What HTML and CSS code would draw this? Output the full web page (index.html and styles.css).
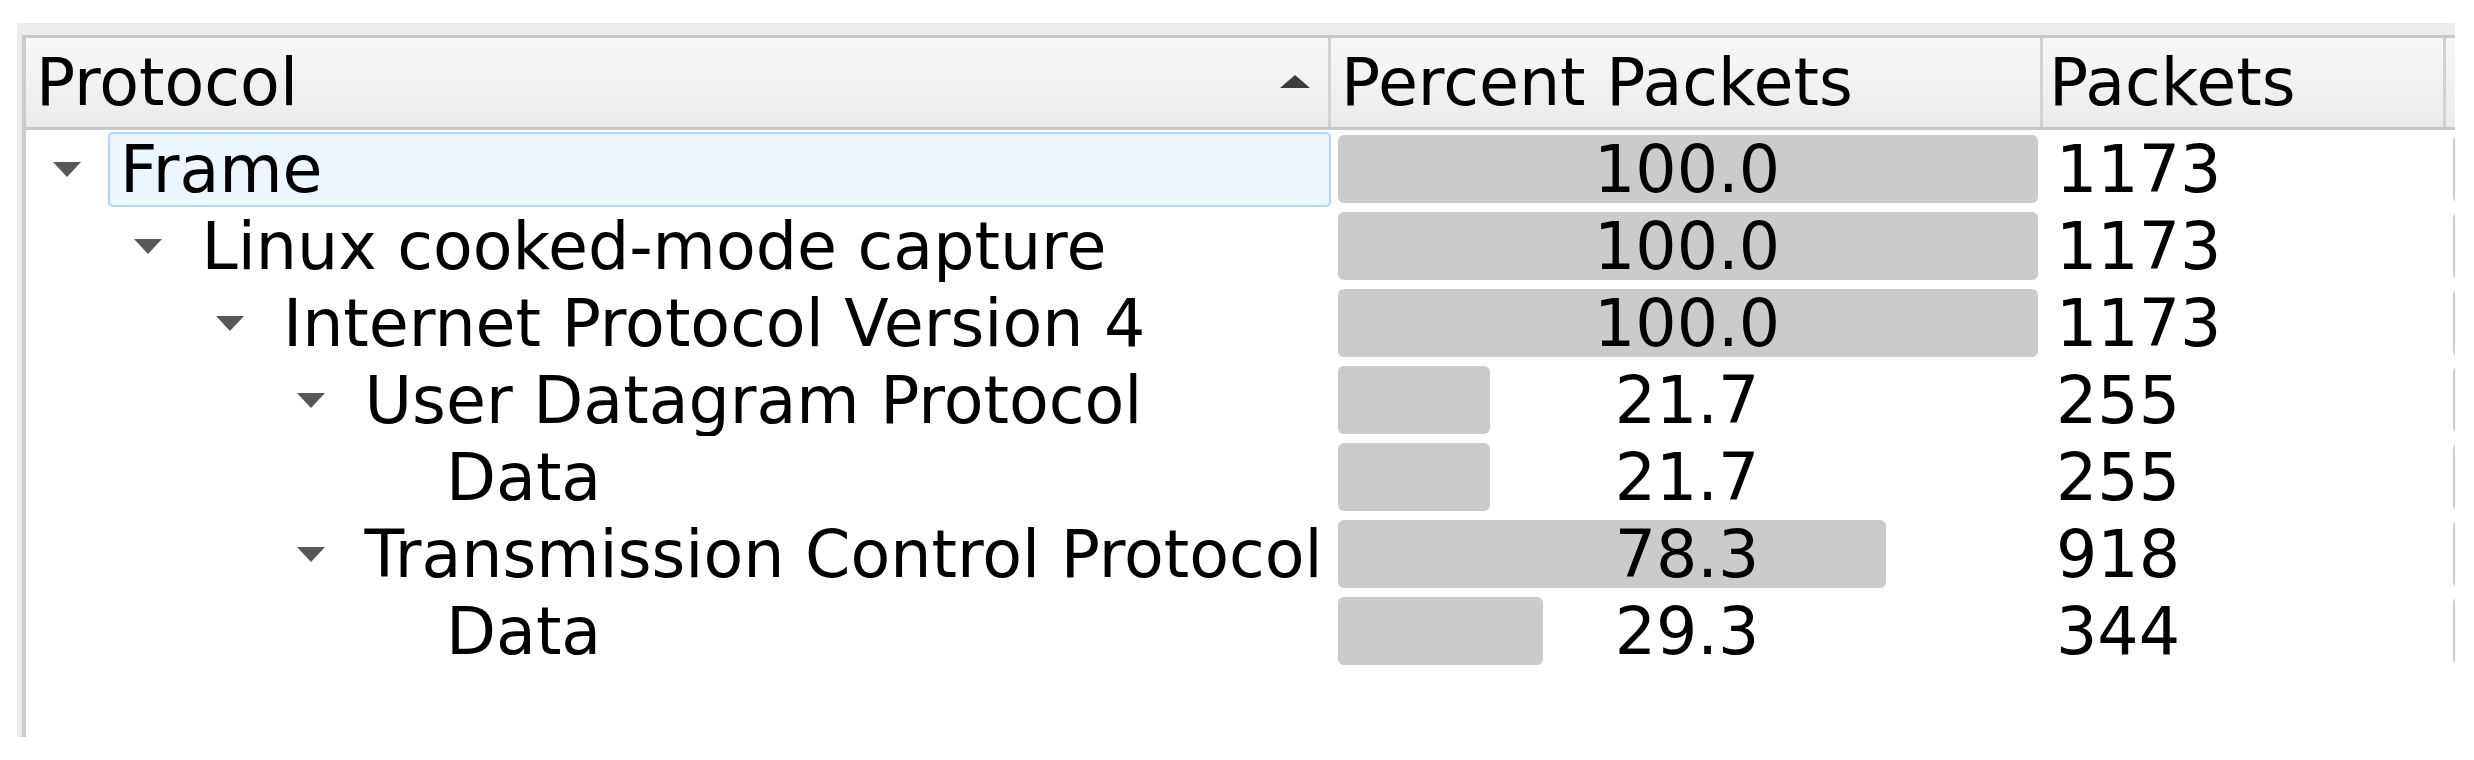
FILE: index.html
```html
<!DOCTYPE html>
<html>
<head>
<meta charset="utf-8">
<title>Protocol Hierarchy</title>
<link rel="stylesheet" href="styles.css">
</head>
<body>
<div class="frame">
  <div class="view">
    <div class="header">
      <div class="hcell hfirst"><span>Protocol</span><span class="sort"></span></div>
      <div class="hcell hpct">Percent Packets</div>
      <div class="hcell hnum">Packets</div>
      <div class="hcell"></div>
    </div>
    <div class="rows">
      <div class="row">
        <div class="tree l0"><div class="branch"><span class="tri"></span></div><div class="item selected">Frame</div></div>
        <div class="pcell"><div class="bar" style="width:700px"></div><div class="pct">100.0</div></div>
        <div class="ncell">1173</div>
        <div class="pcell"><div class="bar" style="width:700px"></div></div>
      </div>
      <div class="row">
        <div class="tree l1"><div class="branch"><span class="tri"></span></div><div class="item">Linux cooked-mode capture</div></div>
        <div class="pcell"><div class="bar" style="width:700px"></div><div class="pct">100.0</div></div>
        <div class="ncell">1173</div>
        <div class="pcell"><div class="bar" style="width:700px"></div></div>
      </div>
      <div class="row">
        <div class="tree l2"><div class="branch"><span class="tri"></span></div><div class="item">Internet Protocol Version 4</div></div>
        <div class="pcell"><div class="bar" style="width:700px"></div><div class="pct">100.0</div></div>
        <div class="ncell">1173</div>
        <div class="pcell"><div class="bar" style="width:700px"></div></div>
      </div>
      <div class="row">
        <div class="tree l3"><div class="branch"><span class="tri"></span></div><div class="item">User Datagram Protocol</div></div>
        <div class="pcell"><div class="bar" style="width:152px"></div><div class="pct">21.7</div></div>
        <div class="ncell">255</div>
        <div class="pcell"><div class="bar" style="width:120px"></div></div>
      </div>
      <div class="row">
        <div class="tree l4"><div class="branch"></div><div class="item">Data</div></div>
        <div class="pcell"><div class="bar" style="width:152px"></div><div class="pct">21.7</div></div>
        <div class="ncell">255</div>
        <div class="pcell"><div class="bar" style="width:100px"></div></div>
      </div>
      <div class="row">
        <div class="tree l3"><div class="branch"><span class="tri"></span></div><div class="item">Transmission Control Protocol</div></div>
        <div class="pcell"><div class="bar" style="width:548px"></div><div class="pct">78.3</div></div>
        <div class="ncell">918</div>
        <div class="pcell"><div class="bar" style="width:580px"></div></div>
      </div>
      <div class="row">
        <div class="tree l4"><div class="branch"></div><div class="item">Data</div></div>
        <div class="pcell"><div class="bar" style="width:205px"></div><div class="pct">29.3</div></div>
        <div class="ncell">344</div>
        <div class="pcell"><div class="bar" style="width:300px"></div></div>
      </div>
    </div>
  </div>
</div>
</body>
</html>
```
FILE: styles.css
```css
html, body {
  margin: 0;
  padding: 0;
  background: #ffffff;
}

body {
  font-family: "DejaVu Sans", "Liberation Sans", sans-serif;
  font-size: 65px;
  line-height: 1;
  color: #000000;
}

.frame {
  margin: 23px 0 0 17px;
  width: 2438px;
  height: 714px;
  box-sizing: border-box;
  padding: 12px 0 0 5px;
  background: #ececec;
  overflow: hidden;
}

.view {
  height: 100%;
  box-sizing: border-box;
  border-top: 3px solid #c9c9c9;
  border-left: 4px solid #cbcbcb;
  background: #ffffff;
  overflow: hidden;
}

.header,
.row {
  display: grid;
  grid-template-columns: 1305px 712px 403px 300px;
}

.header {
  height: 92px;
  box-sizing: border-box;
  border-bottom: 3px solid #c8c8c8;
  background: linear-gradient(#f8f8f8, #ebebeb);
}

.hcell {
  display: flex;
  align-items: center;
  padding-left: 10px;
  box-sizing: border-box;
  border-right: 3px solid #d2d2d2;
  white-space: nowrap;
  overflow: hidden;
}

.hfirst {
  justify-content: space-between;
  padding-right: 18px;
}

.hnum {
  padding-left: 6px;
}

.sort {
  width: 0;
  height: 0;
  border-left: 15px solid transparent;
  border-right: 15px solid transparent;
  border-bottom: 13px solid #3c3c3c;
  margin-top: -2px;
}

.rows {
  padding-top: 1px;
}

.row {
  height: 77px;
}

.tree {
  display: flex;
  align-items: stretch;
  white-space: nowrap;
  min-width: 0;
}

.l0 { padding-left: 0; }
.l1 { padding-left: 81.5px; }
.l2 { padding-left: 163px; }
.l3 { padding-left: 244.5px; }
.l4 { padding-left: 326px; }

.branch {
  flex: 0 0 82px;
  display: flex;
  align-items: center;
  justify-content: center;
}

.tri {
  width: 0;
  height: 0;
  border-left: 14.5px solid transparent;
  border-right: 14.5px solid transparent;
  border-top: 15px solid #585858;
  margin-left: -1px;
}

.item {
  flex: 1 1 auto;
  display: flex;
  align-items: center;
  margin: 1px 0;
  padding-left: 10px;
  border: 2px solid transparent;
  border-radius: 5px;
  overflow: hidden;
}

.item.selected {
  background: #eef6fd;
  border-color: #b3d4f2;
}

.pcell {
  display: grid;
  align-items: center;
}

.bar {
  grid-area: 1 / 1;
  align-self: stretch;
  margin: 4px 0 5px 7px;
  background: #cbcbcb;
  border-radius: 6px;
}

.pct {
  grid-area: 1 / 1;
  text-align: center;
  position: relative;
}

.ncell {
  display: flex;
  align-items: center;
  padding-left: 13px;
}
```
